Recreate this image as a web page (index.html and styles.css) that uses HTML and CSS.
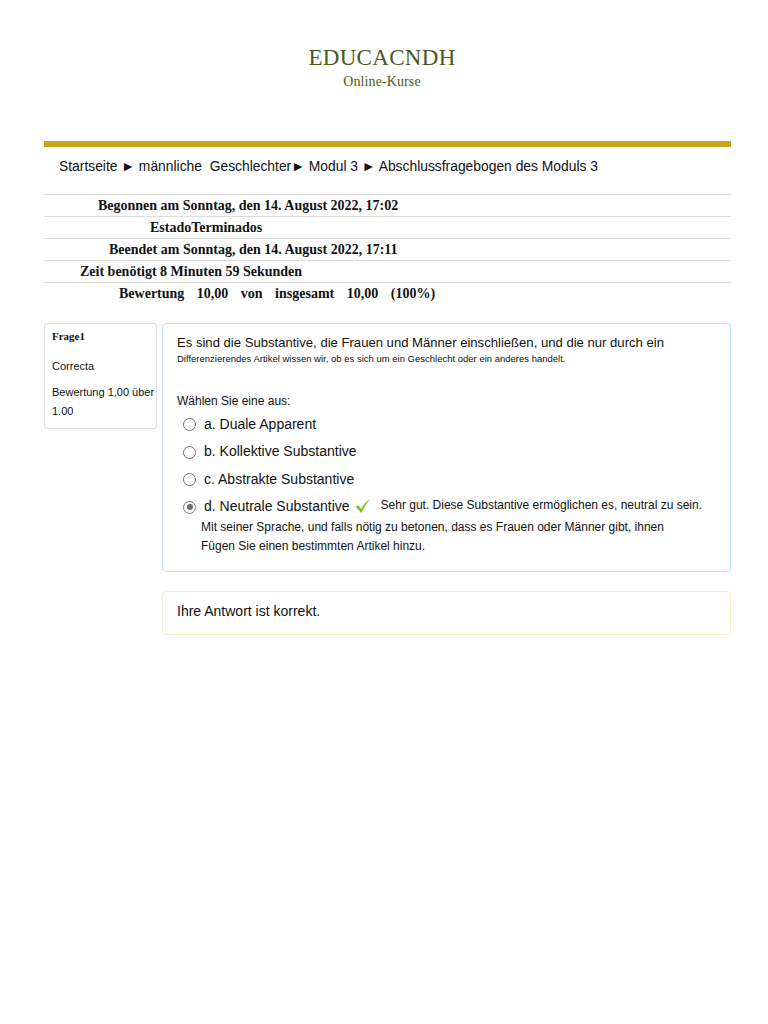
FILE: index.html
```html
<!DOCTYPE html>
<html lang="de">
<head>
<meta charset="utf-8">
<title>EDUCACNDH</title>
<link rel="stylesheet" href="styles.css">
</head>
<body>
<header class="brand">
  <div class="brand-title">EDUCACNDH</div>
  <div class="brand-sub">Online-Kurse</div>
</header>
<div class="page">
  <div class="gold-bar"></div>
  <nav class="crumbs">Startseite ► männliche&nbsp; Geschlechter► Modul 3 ► Abschlussfragebogen des Moduls 3</nav>
  <div class="summary">
    <div class="row r1">Begonnen am Sonntag, den 14. August 2022, 17:02</div>
    <div class="row r2">EstadoTerminados</div>
    <div class="row r3">Beendet am Sonntag, den 14. August 2022, 17:11</div>
    <div class="row r4">Zeit benötigt 8 Minuten 59 Sekunden</div>
    <div class="row r5 spaced">Bewertung 10,00 von insgesamt 10,00 (100%)</div>
  </div>
  <div class="question">
    <aside class="qinfo">
      <div class="qno">Frage1</div>
      <div class="qstate">Correcta</div>
      <div class="qgrade">Bewertung 1,00 über 1.00</div>
    </aside>
    <div class="qbody">
      <div class="qtext">Es sind die Substantive, die Frauen und Männer einschließen, und die nur durch ein</div>
      <div class="qtext-small">Differenzierendes Artikel wissen wir, ob es sich um ein Geschlecht oder ein anderes handelt.</div>
      <div class="prompt">Wählen Sie eine aus:</div>
      <div class="answers">
        <div class="opt"><span class="radio"></span><span class="opt-label">a. Duale Apparent</span></div>
        <div class="opt"><span class="radio"></span><span class="opt-label">b. Kollektive Substantive</span></div>
        <div class="opt"><span class="radio"></span><span class="opt-label">c. Abstrakte Substantive</span></div>
        <div class="opt opt-selected">
          <span class="radio checked"></span><span class="opt-label">d. Neutrale Substantive</span>
          <svg class="tick" width="18" height="16" viewBox="0 0 18 16" aria-hidden="true"><path d="M1.5 8.5 L4.5 7.5 L7 11 C9.5 6.5 12.5 3 16.5 0.8 C13 4.5 10 9 7.5 15 Z" fill="#7cc21e"/></svg>
          <span class="fb">Sehr gut. Diese Substantive ermöglichen es, neutral zu sein.</span>
        </div>
        <div class="fb-more">Mit seiner Sprache, und falls nötig zu betonen, dass es Frauen oder Männer gibt, ihnen</div>
        <div class="fb-more">Fügen Sie einen bestimmten Artikel hinzu.</div>
      </div>
    </div>
  </div>
  <div class="outcome">Ihre Antwort ist korrekt.</div>
</div>
</body>
</html>
```

FILE: styles.css
```css
html, body { margin: 0; padding: 0; background: #ffffff; }
body { font-family: "Liberation Sans", Arial, sans-serif; color: #111; }

.brand { text-align: center; padding: 44px 4px 0 0; color: #4b5a1c; font-family: "Liberation Serif", "Times New Roman", serif; }
.brand-title { font-size: 23px; line-height: 28px; letter-spacing: 0.3px; }
.brand-sub { font-size: 14px; line-height: 18px; margin-top: 1px; letter-spacing: 0.1px; }

.page { width: 687px; margin-left: 44px; }

.gold-bar { height: 6px; background: #c9a31b; margin-top: 50px; }

.crumbs { font-size: 13.85px; line-height: 18px; padding: 10px 0 0 15px; height: 47px; box-sizing: border-box; color: #111; }

.summary { font-family: "Liberation Serif", "Times New Roman", serif; font-weight: bold; font-size: 14px; }
.row { border-top: 1px solid #dcdcdc; height: 21px; line-height: 22px; white-space: nowrap; }
.r1 { padding-left: 54px; }
.r2 { padding-left: 106px; }
.r3 { padding-left: 65px; }
.r4 { padding-left: 36px; }
.r5 { padding-left: 75px; }
.spaced { word-spacing: 9px; }

.question { display: flex; align-items: flex-start; gap: 5px; margin-top: 19px; }
.qinfo { width: 113px; box-sizing: border-box; border: 1px solid #dedede; border-radius: 3px; padding: 5px 0 7px 7px; font-size: 11px; color: #111; }
.qno { font-family: "Liberation Serif", "Times New Roman", serif; font-weight: bold; font-size: 11px; line-height: 14px; }
.qstate { margin-top: 16px; line-height: 14px; }
.qgrade { margin-top: 10px; line-height: 19px; }

.qbody { flex: 1; box-sizing: border-box; border: 1px solid #b6e4ee; border-radius: 4px; padding: 10px 14px 20px 14px; height: 249px; }
.qtext { font-size: 13.1px; line-height: 17px; }
.qtext-small { font-size: 9.5px; line-height: 14px; margin-top: 1px; }
.prompt { font-size: 12px; line-height: 16px; margin-top: 27px; }
.answers { margin-top: 1px; padding-left: 6px; }
.opt { display: flex; align-items: center; height: 27.5px; font-size: 14px; }
.radio { width: 11px; height: 11px; border: 1px solid #6f6f6f; border-radius: 50%; margin-right: 8px; margin-top: 2px; box-sizing: content-box; flex: none; position: relative; background: #fff; }
.radio.checked { border-color: #7a7a7a; }
.radio.checked::after { content: ""; position: absolute; left: 2.5px; top: 2.5px; width: 6px; height: 6px; border-radius: 50%; background: #6c6c6c; }
.tick { margin: 0 9px 0 4px; flex: none; }
.fb { font-size: 12px; margin-top: -2px; }
.fb-more { font-size: 12px; line-height: 19px; padding-left: 18px; }
.opt-selected + .fb-more { margin-top: -2px; }

.outcome { margin: 19px 0 0 118px; border: 1px solid #fbeccb; border-radius: 4px; height: 44px; box-sizing: border-box; padding: 10px 14px; font-size: 14px; line-height: 18px; }
```
